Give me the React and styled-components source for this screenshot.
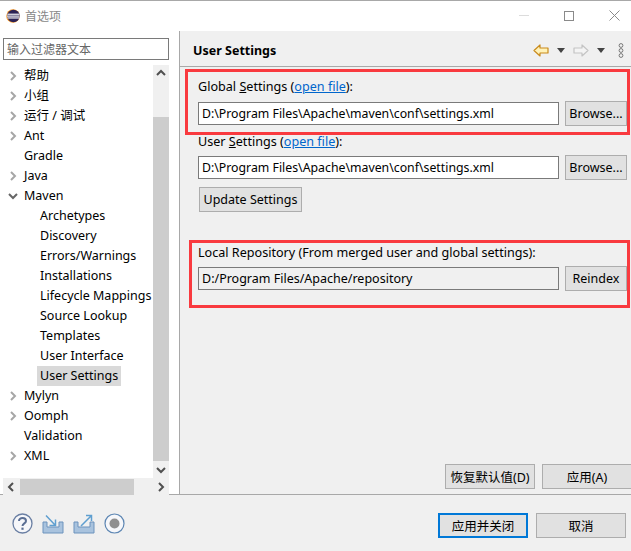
import React from "react";
import styled, { createGlobalStyle } from "styled-components";

const TREE = [
  { label: "帮助", arrow: "right" },
  { label: "小组", arrow: "right" },
  { label: "运行 / 调试", arrow: "right" },
  { label: "Ant", arrow: "right" },
  { label: "Gradle" },
  { label: "Java", arrow: "right" },
  { label: "Maven", arrow: "down" },
  { label: "Archetypes", child: true },
  { label: "Discovery", child: true },
  { label: "Errors/Warnings", child: true },
  { label: "Installations", child: true },
  { label: "Lifecycle Mappings", child: true },
  { label: "Source Lookup", child: true },
  { label: "Templates", child: true },
  { label: "User Interface", child: true },
  { label: "User Settings", child: true, selected: true },
  { label: "Mylyn", arrow: "right" },
  { label: "Oomph", arrow: "right" },
  { label: "Validation" },
  { label: "XML", arrow: "right" },
];

const Chevron = ({ dir, color = "#a6a6a6", width = 2 }) => {
  const points = {
    right: "4,2 8,6 4,10",
    left: "8,2 4,6 8,10",
    down: "2,4 6,8 10,4",
    up: "2,8 6,4 10,8",
  };
  return (
    <svg width="12" height="12" viewBox="0 0 12 12">
      <polyline points={points[dir]} fill="none" stroke={color} strokeWidth={width} />
    </svg>
  );
};

const EclipseLogo = () => (
  <svg width="14" height="14" viewBox="0 0 15 15">
    <circle cx="7.5" cy="7.5" r="7.2" fill="#f7941e" />
    <circle cx="8" cy="7.5" r="6.7" fill="#2c2255" />
    <rect x="1.5" y="5" width="13" height="1.2" fill="#fff" />
    <rect x="1" y="7" width="13.5" height="1.2" fill="#fff" />
    <rect x="1.5" y="9" width="13" height="1.2" fill="#fff" />
  </svg>
);

const NavArrow = ({ flip, fill, stroke }) => (
  <svg width="16" height="13" viewBox="0 0 16 13" style={flip ? { transform: "scaleX(-1)" } : undefined}>
    <path d="M1 6.5 L7 1 V4 H15 V9 H7 V12 Z" fill={fill} stroke={stroke} strokeWidth="1.2" strokeLinejoin="round" />
  </svg>
);

const Drop = () => (
  <svg width="8" height="5" viewBox="0 0 8 5">
    <path d="M0 0 H8 L4 5 Z" fill="#444" />
  </svg>
);

const MoreDots = () => (
  <svg width="6" height="15" viewBox="0 0 6 15">
    <circle cx="3" cy="2.5" r="1.9" fill="none" stroke="#777" />
    <circle cx="3" cy="7.5" r="1.9" fill="none" stroke="#777" />
    <circle cx="3" cy="12.5" r="1.9" fill="none" stroke="#777" />
  </svg>
);

const HelpIcon = () => (
  <svg width="21" height="21" viewBox="0 0 21 21">
    <circle cx="10.5" cy="10.5" r="9.5" fill="#f6f7fa" stroke="#6a7fa3" strokeWidth="1.3" />
    <path d="M7 8 C7 3.8 14 4 14 8 C14 10.4 10.5 10.4 10.5 13" fill="none" stroke="#5b6f94" strokeWidth="2" />
    <rect x="9.4" y="14.6" width="2.2" height="2.2" fill="#5b6f94" />
  </svg>
);

const TrayIcon = ({ out }) => (
  <svg width="22" height="20" viewBox="0 0 22 20">
    <path d="M1 8 H5 V13 H17 V8 H21 V19 H1 Z" fill="#a9c3de" stroke="#6d93bd" strokeWidth="1" />
    {out ? (
      <path d="M8 12 L18 2 M13 1.5 H18.5 V7" fill="none" stroke="#5f9fd0" strokeWidth="1.5" />
    ) : (
      <path d="M4 1.5 L13 11 M13.5 5.5 V11.5 H7.5" fill="none" stroke="#5f9fd0" strokeWidth="1.5" />
    )}
  </svg>
);

const RecordIcon = () => (
  <svg width="21" height="21" viewBox="0 0 21 21">
    <circle cx="10.5" cy="10.5" r="9.5" fill="#f6f7fa" stroke="#5d86b3" strokeWidth="1.2" />
    <circle cx="10.5" cy="10.5" r="5" fill="#8f8f8f" />
  </svg>
);

export default function App() {
  return (
    <>
      <GlobalStyle />
      <Dialog>
        <TitleBar>
          <EclipseLogo />
          <TitleText>首选项</TitleText>
          <WindowControls>
            <MinLine />
            <MaxBox />
            <svg width="11" height="11" viewBox="0 0 11 11">
              <path d="M0.5 0.5 L10.5 10.5 M10.5 0.5 L0.5 10.5" stroke="#8a8a8a" strokeWidth="1" />
            </svg>
          </WindowControls>
        </TitleBar>

        <Body>
          <Sidebar>
            <FilterInput>输入过滤器文本</FilterInput>
            <TreeFrame>
              <TreeList>
                {TREE.map((item) => (
                  <TreeRow key={item.label} $child={item.child}>
                    {item.arrow && (
                      <ArrowSlot>
                        <Chevron
                          dir={item.arrow}
                          color={item.arrow === "down" ? "#666" : "#a6a6a6"}
                        />
                      </ArrowSlot>
                    )}
                    <TreeLabel $selected={item.selected}>{item.label}</TreeLabel>
                  </TreeRow>
                ))}
              </TreeList>
              <VScroll>
                <ScrollButton>
                  <Chevron dir="up" color="#505050" />
                </ScrollButton>
                <VThumb />
                <ScrollButton>
                  <Chevron dir="down" color="#505050" />
                </ScrollButton>
              </VScroll>
            </TreeFrame>
            <HScroll>
              <ScrollButton>
                <Chevron dir="left" color="#505050" />
              </ScrollButton>
              <HThumb />
              <ScrollButton>
                <Chevron dir="right" color="#505050" />
              </ScrollButton>
            </HScroll>
          </Sidebar>

          <Pane>
            <PaneHeader>
              <PaneTitle>User Settings</PaneTitle>
              <HeaderTools>
                <NavArrow fill="#fff2b8" stroke="#c98a1b" />
                <Drop />
                <NavArrow flip fill="#f4f4f4" stroke="#c4c4c4" />
                <Drop />
                <DotsSlot>
                  <MoreDots />
                </DotsSlot>
              </HeaderTools>
            </PaneHeader>

            <Form>
              <FieldLabel $bottom="7px">
                Global <u>S</u>ettings (<FileLink>open file</FileLink>):
              </FieldLabel>
              <FieldRow>
                <PathInput $size="12.3px">D:\Program Files\Apache\maven\conf\settings.xml</PathInput>
                <Button $width="62px">Browse...</Button>
              </FieldRow>

              <FieldLabel $top="7px">
                User <u>S</u>ettings (<FileLink>open file</FileLink>):
              </FieldLabel>
              <FieldRow>
                <PathInput $size="12.3px">D:\Program Files\Apache\maven\conf\settings.xml</PathInput>
                <Button $width="62px">Browse...</Button>
              </FieldRow>

              <UpdateRow>
                <Button $width="103px">Update Settings</Button>
              </UpdateRow>

              <FieldLabel $top="32px">Local Repository (From merged user and global settings):</FieldLabel>
              <FieldRow>
                <PathInput $readOnly>D:/Program Files/Apache/repository</PathInput>
                <Button $width="62px">Reindex</Button>
              </FieldRow>
            </Form>

            <PaneActions>
              <Button $width="90px">恢复默认值(D)</Button>
              <Button $width="90px">应用(A)</Button>
            </PaneActions>
          </Pane>
        </Body>

        <Footer>
          <FooterIcons>
            <HelpIcon />
            <TrayIcon />
            <TrayIcon out />
            <RecordIcon />
          </FooterIcons>
          <FooterButtons>
            <Button $width="90px" $primary>应用并关闭</Button>
            <Button $width="90px">取消</Button>
          </FooterButtons>
        </Footer>

        <Highlight $left="185px" $top="69px" $width="445px" $height="66px" />
        <Highlight $left="189px" $top="240px" $width="441px" $height="68px" />
      </Dialog>
    </>
  );
}

const GlobalStyle = createGlobalStyle`
  html, body {
    margin: 0;
    padding: 0;
    background: #f0f0f0;
  }
  * {
    box-sizing: border-box;
  }
`;

const Dialog = styled.div`
  position: relative;
  width: 631px;
  height: 551px;
  overflow: hidden;
  display: flex;
  flex-direction: column;
  background: #f0f0f0;
  color: #000;
  font-family: "Noto Sans", "Noto Sans CJK SC", sans-serif;
  font-size: 12px;
`;

const TitleBar = styled.div`
  height: 31px;
  flex: none;
  display: flex;
  align-items: center;
  padding: 0 0 1px 6px;
  background: #fff;
  border-top: 1px solid #a8a8a8;
`;

const TitleText = styled.span`
  margin-left: 5px;
  color: #888;
  font-size: 12px;
`;

const WindowControls = styled.div`
  margin-left: auto;
  display: flex;
  align-items: center;
  gap: 35px;
  padding-right: 11px;
`;

const MinLine = styled.div`
  width: 10px;
  height: 1px;
  background: #dcdcdc;
`;

const MaxBox = styled.div`
  width: 10px;
  height: 10px;
  border: 1px solid #8a8a8a;
`;

const Body = styled.div`
  height: 464px;
  flex: none;
  display: flex;
  border-bottom: 1px solid #a8a8a8;
`;

const Sidebar = styled.div`
  width: 179px;
  flex: none;
  display: flex;
  flex-direction: column;
  padding: 7px 10px 0 3px;
  background: #fff;
`;

const FilterInput = styled.div`
  height: 22px;
  flex: none;
  margin-bottom: 5px;
  padding-left: 3px;
  line-height: 21px;
  color: #666;
  background: #fff;
  border: 1px solid #7a7a7a;
`;

const TreeFrame = styled.div`
  height: 413px;
  flex: none;
  display: flex;
`;

const TreeList = styled.div`
  flex: 1;
  min-width: 0;
  overflow: hidden;
  padding-top: 1px;
`;

const TreeRow = styled.div`
  position: relative;
  height: 20px;
  display: flex;
  align-items: center;
  padding-left: ${(props) => (props.$child ? "34px" : "18px")};
  white-space: nowrap;
  font-size: 12.5px;
`;

const ArrowSlot = styled.span`
  position: absolute;
  left: 4px;
  top: 4px;
  display: flex;
`;

const TreeLabel = styled.span`
  height: 20px;
  line-height: 20px;
  padding: 0 3px;
  background: ${(props) => (props.$selected ? "#d9d9d9" : "transparent")};
`;

const VScroll = styled.div`
  width: 16px;
  flex: none;
  display: flex;
  flex-direction: column;
  background: #f0f0f0;
`;

const ScrollButton = styled.div`
  flex: none;
  width: 16px;
  height: 16px;
  display: flex;
  align-items: center;
  justify-content: center;
`;

const VThumb = styled.div`
  height: 344px;
  flex: none;
  margin-top: 36px;
  margin-bottom: auto;
  background: #cdcdcd;
`;

const HScroll = styled.div`
  height: 17px;
  flex: none;
  display: flex;
  padding-top: 1px;
  background: #f0f0f0;
`;

const HThumb = styled.div`
  width: 114px;
  flex: none;
  margin: 0 auto 0 1px;
  background: #cdcdcd;
`;

const Pane = styled.div`
  flex: 1;
  min-width: 0;
  display: flex;
  flex-direction: column;
  border-left: 1px solid #a8a8a8;
  overflow: hidden;
`;

const PaneHeader = styled.div`
  height: 36px;
  flex: none;
  display: flex;
  align-items: center;
  padding: 3px 7px 0 13px;
  border-bottom: 1px solid #a8a8a8;
`;

const PaneTitle = styled.h1`
  margin: 0;
  font-size: 12.5px;
  font-weight: 700;
`;

const HeaderTools = styled.div`
  margin-left: auto;
  display: flex;
  align-items: center;
  gap: 8px;
`;

const DotsSlot = styled.span`
  display: flex;
  margin-left: 5px;
`;

const Form = styled.div`
  display: flex;
  flex-direction: column;
  padding: 11px 4px 0 18px;
`;

const FieldLabel = styled.div`
  height: 16px;
  line-height: 18px;
  margin-top: ${(props) => props.$top || "0"};
  margin-bottom: ${(props) => props.$bottom || "6px"};
  white-space: nowrap;
  font-size: 12.6px;
`;

const FileLink = styled.span`
  color: #0066cc;
  text-decoration: underline;
`;

const FieldRow = styled.div`
  display: grid;
  grid-template-columns: 361px 62px;
  column-gap: 6px;
  align-items: center;
  height: 25px;
`;

const PathInput = styled.div`
  height: 23px;
  padding-left: 3px;
  line-height: 21px;
  white-space: nowrap;
  font-size: ${(props) => props.$size || "12.5px"};
  background: ${(props) => (props.$readOnly ? "#f0f0f0" : "#fff")};
  border: 1px solid #7a7a7a;
`;

const Button = styled.div`
  flex: none;
  width: ${(props) => props.$width};
  height: 25px;
  display: flex;
  align-items: center;
  justify-content: center;
  white-space: nowrap;
  font-size: 12.5px;
  background: #e1e1e1;
  border: ${(props) => (props.$primary ? "2px solid #0078d7" : "1px solid #adadad")};
`;

const UpdateRow = styled.div`
  display: flex;
  margin: 7px 0 0 1px;
`;

const PaneActions = styled.div`
  margin-top: auto;
  margin-right: -1px;
  margin-bottom: 5px;
  display: flex;
  justify-content: flex-end;
  gap: 7px;
`;

const Footer = styled.div`
  flex: 1;
  display: flex;
  align-items: flex-start;
  justify-content: space-between;
  padding: 18px 5px 0 12px;
`;

const FooterIcons = styled.div`
  display: flex;
  align-items: center;
  gap: 9px;
`;

const FooterButtons = styled.div`
  display: flex;
  gap: 8px;
`;

const Highlight = styled.div`
  position: absolute;
  left: ${(props) => props.$left};
  top: ${(props) => props.$top};
  width: ${(props) => props.$width};
  height: ${(props) => props.$height};
  border: 3px solid #f93a3f;
  pointer-events: none;
`;
